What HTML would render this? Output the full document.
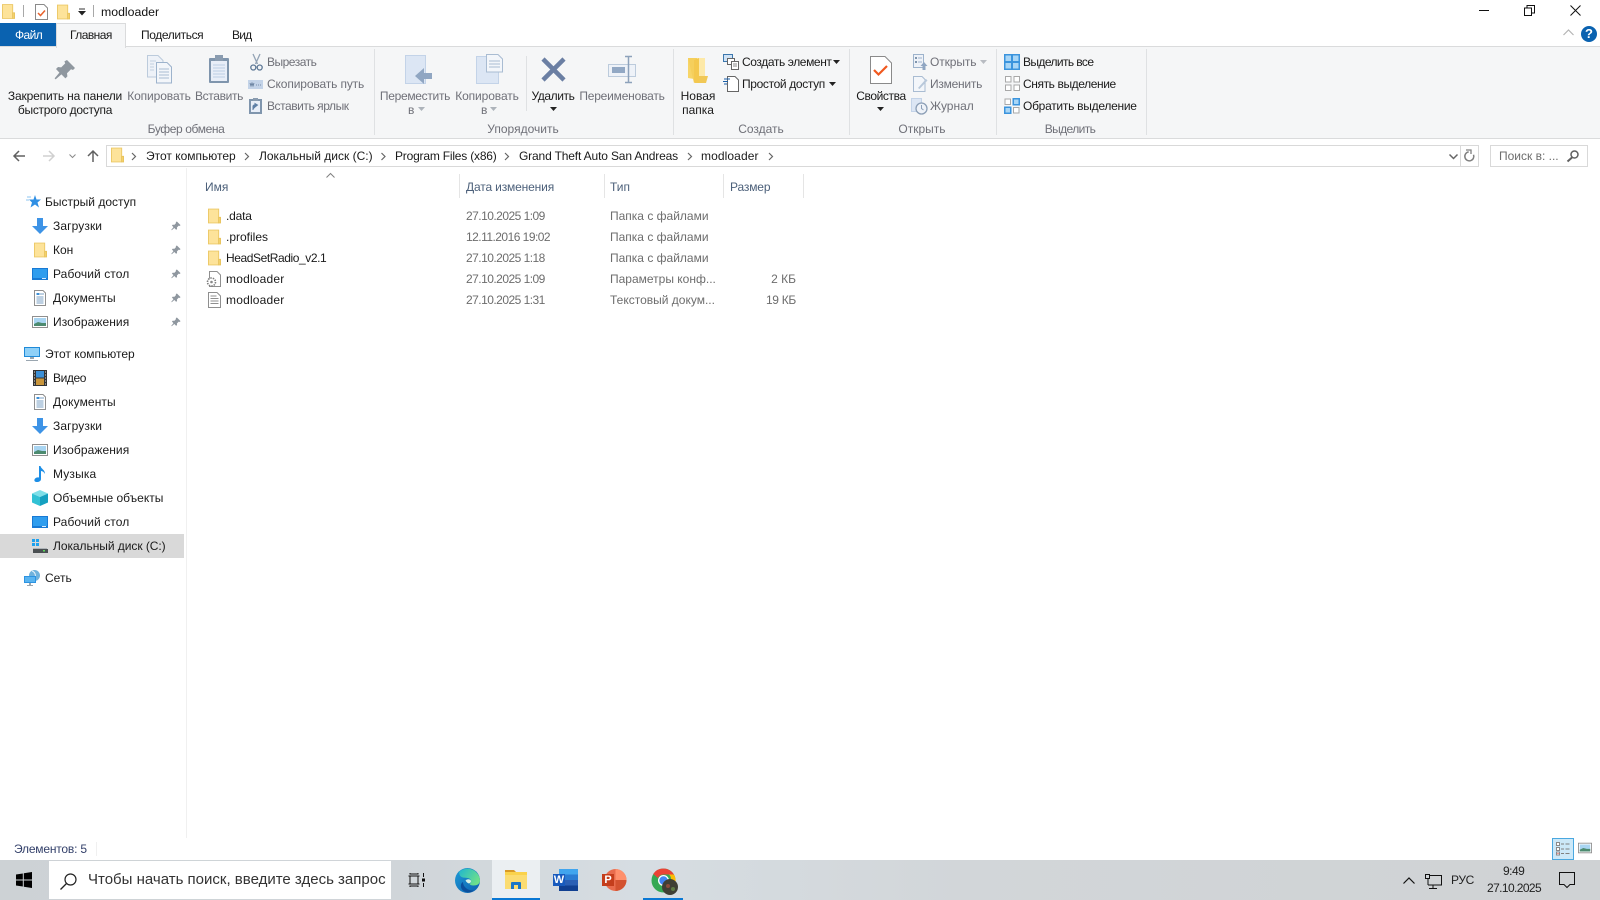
<!DOCTYPE html>
<html lang="ru"><head><meta charset="utf-8"><title>modloader</title>
<style>
html,body{margin:0;padding:0;width:1600px;height:900px;overflow:hidden;background:#fff}
body{position:relative;font:12px/16px "Liberation Sans","Noto Sans CJK SC",sans-serif;color:#1a1a1a;filter:blur(.25px)}
.t{position:absolute;white-space:nowrap;line-height:16px}
.c{transform:translateX(-50%);text-align:center}
.g{color:#6f7078}
.s{color:#6d6d6d}
.d{letter-spacing:-.53px}
.b{position:absolute}
svg{position:absolute;overflow:visible}
</style></head><body>
<svg width="0" height="0" style="position:absolute"><defs>
<symbol id="folder" viewBox="0 0 14 16"><path d="M.5.5H11.500V15.500H.5Z" fill="#fde39a" stroke="#ecc866"/><path d="M11.500 9.500h2v6h-2z" fill="#f6d56d" stroke="#e8c35e"/></symbol>
<symbol id="down" viewBox="0 0 16 16"><path d="M5 0h6v8h5l-8 8-8-8h5z" fill="#3d93e6"/></symbol>
<symbol id="desk" viewBox="0 0 16 12"><rect width="16" height="12" fill="#1879d4"/><rect x="1" y="1" width="14" height="9" fill="#2f9dee"/><path d="M10 10.500h4" stroke="#d8ecff"/></symbol>
<symbol id="doc" viewBox="0 0 12 16"><path d="M.5.5H9l2.500 2.500V15.500H.5z" fill="#fff" stroke="#8f8f8f"/><path d="M6 4h4M2.500 7h7M2.500 9h7M2.500 11h7M2.500 13h7" stroke="#7ba2c4"/><path d="M2.500 3h3v2h-3z" fill="#3c8fd6"/></symbol>
<symbol id="pic" viewBox="0 0 16 12"><rect x=".5" y=".5" width="15" height="11" fill="#fff" stroke="#8f8f8f"/><rect x="2" y="2" width="12" height="8" fill="#a9d5f2"/><path d="M2 8l4-2 4 1 4 0v3H2z" fill="#4d8b70"/></symbol>
<symbol id="pin" viewBox="0 0 11 11"><path d="M6.500.5l4 4-1 1-1-.4-2 2 .2 1.600-1 1-2-2L.8 10.200l-.5-.5L2.700 6.800 1 5l1-1 1.600.2 2-2-.4-1z" fill="#8f979f"/></symbol>
</defs></svg>

<!-- title bar -->
<svg style="left:2px;top:4px" width="13" height="15"><use href="#folder" width="13" height="15"/></svg>
<div class="b" style="left:23px;top:5px;width:1px;height:12px;background:#a8a8a8"></div>
<svg style="left:35px;top:4px" width="13" height="16" viewBox="0 0 13 16"><path d="M.5.5H9l3.500 3.500V15.500H.5z" fill="#fff" stroke="#8a8a8a"/><path d="M3 9l2.500 2.500L10 6.500" fill="none" stroke="#e8622c" stroke-width="1.500"/></svg>
<svg style="left:57px;top:4px" width="13" height="16"><use href="#folder" width="13" height="16"/></svg>
<svg style="left:78px;top:9px" width="8" height="7" viewBox="0 0 8 7"><path d="M1 0h6" stroke="#333"/><path d="M0 2h8L4 6.500z" fill="#222"/></svg>
<div class="b" style="left:93px;top:5px;width:1px;height:12px;background:#a8a8a8"></div>
<div class="t" style="left:101px;top:4px;font-size:12.300px;color:#111">modloader</div>
<div class="b" style="left:1479px;top:10px;width:10px;height:1px;background:#111"></div>
<svg style="left:1524px;top:5px" width="11" height="11" viewBox="0 0 11 11"><path d="M.5 3h7v7.500h-7zM3 3V.5h7.500V8H8" fill="none" stroke="#111"/></svg>
<svg style="left:1570px;top:5px" width="11" height="11" viewBox="0 0 11 11"><path d="M.5.5l10 10M10.500.5l-10 10" stroke="#111"/></svg>

<!-- tabs -->
<div class="b" style="left:0;top:23px;width:56px;height:23px;background:#0a62b0"></div>
<div class="t" style="left:15px;top:27px;color:#fff;letter-spacing:-.6px">Файл</div>
<div class="b" style="left:56px;top:23px;width:68px;height:24px;background:#f5f6f7;border:1px solid #dadbdc;border-bottom:0;z-index:2"></div>
<div class="t" style="left:70px;top:27px;z-index:3;letter-spacing:-.55px">Главная</div>
<div class="t" style="left:141px;top:27px;letter-spacing:-.4px">Поделиться</div>
<div class="t" style="left:232px;top:27px;letter-spacing:-.8px">Вид</div>
<svg style="left:1563px;top:29px" width="11" height="7" viewBox="0 0 11 7"><path d="M.5 6L5.500 1l5 5" fill="none" stroke="#b5b5b5" stroke-width="1.200"/></svg>
<div class="b" style="left:1581px;top:26px;width:16px;height:16px;border-radius:50%;background:#0a62b0;color:#fff;font:bold 13px/16px 'Liberation Sans',sans-serif;text-align:center">?</div>

<!-- ribbon -->
<div class="b" style="left:0;top:46px;width:1600px;height:91px;background:#f5f6f7;border-top:1px solid #dadbdc;border-bottom:1px solid #dadbdc"></div>
<div class="b" style="left:374px;top:49px;width:1px;height:86px;background:#dfe1e3"></div>
<div class="b" style="left:526px;top:56px;width:1px;height:55px;background:#dfe1e3"></div>
<div class="b" style="left:673px;top:49px;width:1px;height:86px;background:#dfe1e3"></div>
<div class="b" style="left:849px;top:49px;width:1px;height:86px;background:#dfe1e3"></div>
<div class="b" style="left:996px;top:49px;width:1px;height:86px;background:#dfe1e3"></div>
<div class="b" style="left:1146px;top:49px;width:1px;height:86px;background:#dfe1e3"></div>

<!-- pin -->
<svg style="left:54px;top:59px" width="22" height="22" viewBox="0 0 11 11"><use href="#pin" width="11" height="11"/></svg>
<div class="t c" style="left:65px;top:88px;letter-spacing:-.16px">Закрепить на панели</div>
<div class="t c" style="left:65px;top:102px;letter-spacing:-.3px">быстрого доступа</div>
<!-- copy -->
<svg style="left:147px;top:55px" width="25" height="29" viewBox="0 0 25 29"><path d="M.5.500H11l5 5V22H.5z" fill="#eef2f8" stroke="#bccbdc"/><path d="M9.500 7.500H20l4.500 4.500v16H9.500z" fill="#f3f6fa" stroke="#9db3cc"/><path d="M12 14h10M12 17h10M12 20h10M12 23h10" stroke="#a9bcd2"/><path d="M3 6h6M3 9h4M3 12h4M3 15h4" stroke="#c3d0df"/></svg>
<div class="t c g" style="left:159px;top:88px;letter-spacing:-.1px">Копировать</div>
<!-- paste -->
<svg style="left:208px;top:55px" width="22" height="29" viewBox="0 0 22 29"><rect x="1" y="3" width="20" height="25" rx="1" fill="#7f95ad"/><rect x="3" y="6" width="16" height="20" fill="#e8eef8"/><path d="M5 10h12M5 13h12M5 16h12M5 19h12M5 22h12" stroke="#bccde3"/><rect x="7" y="0" width="8" height="6" fill="#8a9cb0"/></svg>
<div class="t c g" style="left:219px;top:88px;letter-spacing:-.35px">Вставить</div>
<!-- small clipboard -->
<svg style="left:250px;top:54px" width="13" height="17" viewBox="0 0 13 17"><path d="M3 0l4.500 10M10 0L5.500 10" stroke="#93a3b5" stroke-width="1.300"/><circle cx="3.300" cy="13.500" r="2.500" fill="none" stroke="#5d7896" stroke-width="1.300"/><circle cx="9.700" cy="13.500" r="2.500" fill="none" stroke="#5d7896" stroke-width="1.300"/></svg>
<div class="t g" style="left:267px;top:54px;letter-spacing:-.5px">Вырезать</div>
<svg style="left:248px;top:80px" width="15" height="9" viewBox="0 0 15 9"><rect width="15" height="9" fill="#c3d3e8"/><path d="M2 3l1 3 1-3 1 3 1-3M8 5h1M10 5h1M12 5h1" stroke="#5f7897" fill="none" stroke-width=".8"/></svg>
<div class="t g" style="left:267px;top:76px;letter-spacing:-.13px">Скопировать путь</div>
<svg style="left:249px;top:98px" width="13" height="16" viewBox="0 0 13 16"><rect x="0" y="1" width="13" height="15" fill="#7f95ad"/><rect x="2" y="3" width="9" height="11" fill="#e8eef8"/><rect x="4" y="0" width="5" height="3" fill="#8a9cb0"/><path d="M4 12V8l1-1h3M6 5.500l2.500 1.500L6 9z" fill="#5e7fa6" stroke="#5e7fa6"/></svg>
<div class="t g" style="left:267px;top:98px;letter-spacing:-.45px">Вставить ярлык</div>
<div class="t c g" style="left:186px;top:121px;letter-spacing:-.4px">Буфер обмена</div>

<!-- move/copy -->
<svg style="left:405px;top:55px" width="28" height="29" viewBox="0 0 28 29"><rect x=".5" y=".5" width="20" height="28" fill="#dce6f4" stroke="#c3d3e8"/><path d="M19 13v5h8v6h-8v5L10 21z" fill="#90a6c2"/></svg>
<div class="t c g" style="left:415px;top:88px;letter-spacing:-.3px">Переместить</div>
<div class="t g" style="left:408px;top:102px">в</div>
<svg style="left:418px;top:107px" width="7" height="4"><path d="M0 0h7L3.500 4z" fill="#adb3ba"/></svg>
<svg style="left:476px;top:54px" width="27" height="30" viewBox="0 0 27 30"><rect x=".5" y="2.500" width="22" height="27" fill="#dce6f4" stroke="#c3d3e8"/><path d="M10.500.5H22l4.500 4.500V18H10.500z" fill="#f3f6fa" stroke="#a9bcd2"/><path d="M13 7h11M13 10h11M13 13h11" stroke="#a9bcd2"/></svg>
<div class="t c g" style="left:487px;top:88px;letter-spacing:-.1px">Копировать</div>
<div class="t g" style="left:481px;top:102px">в</div>
<svg style="left:490px;top:107px" width="7" height="4"><path d="M0 0h7L3.500 4z" fill="#adb3ba"/></svg>
<svg style="left:541px;top:57px" width="25" height="25" viewBox="0 0 25 25"><path d="M2 2l21 21M23 2L2 23" stroke="#6b7fa3" stroke-width="4.500"/></svg>
<div class="t c" style="left:553px;top:88px;letter-spacing:-.4px">Удалить</div>
<svg style="left:550px;top:107px" width="7" height="4"><path d="M0 0h7L3.500 4z" fill="#222"/></svg>
<svg style="left:608px;top:56px" width="29" height="27" viewBox="0 0 29 27"><rect x=".5" y="8.500" width="27" height="12" fill="#eef2f8" stroke="#bccbdc"/><rect x="4" y="11" width="13" height="6" fill="#92a8c4"/><path d="M17 .5h3.500L24 .5M17 26.500h7M20.500 1v25" stroke="#8da2bb" stroke-width="1.500" fill="none"/></svg>
<div class="t c g" style="left:622px;top:88px;letter-spacing:-.2px">Переименовать</div>
<div class="t c g" style="left:523px;top:121px">Упорядочить</div>

<!-- new -->
<svg style="left:687px;top:57px" width="22" height="28" viewBox="0 0 22 28"><path d="M1 1h6v21l-6-1z" fill="#f7d568"/><path d="M1 1l9 0v24l-3 1z" fill="#f5cf5c"/><path d="M10 1h8v18l-8 0z" fill="#fde9a8"/><path d="M7 19h14l-2 7H8z" fill="#f1c856"/><path d="M7 3l5-2v25l-5-1z" fill="#f4c84e"/></svg>
<div class="t c" style="left:698px;top:88px">Новая</div>
<div class="t c" style="left:698px;top:102px">папка</div>
<svg style="left:723px;top:54px" width="16" height="16" viewBox="0 0 16 16"><rect x=".5" y=".5" width="9" height="7" fill="#cfe2f5" stroke="#3c77ad"/><rect x="4.500" y="4.500" width="7" height="6" fill="#fff" stroke="#666"/><rect x="8.500" y="7.500" width="7" height="8" fill="#fff" stroke="#666"/><path d="M10 10h4M10 12h4" stroke="#888"/></svg>
<div class="t" style="left:742px;top:54px;letter-spacing:-.4px">Создать элемент</div>
<svg style="left:833px;top:60px" width="7" height="4"><path d="M0 0h7L3.500 4z" fill="#222"/></svg>
<svg style="left:723px;top:76px" width="16" height="16" viewBox="0 0 16 16"><path d="M4.500.5H12l3.500 3.500v11.500h-11z" fill="#fff" stroke="#666"/><path d="M1 3h6M0 5.500h5M1 8h3" stroke="#1a5fa8" stroke-width="1"/></svg>
<div class="t" style="left:742px;top:76px;letter-spacing:-.35px">Простой доступ</div>
<svg style="left:829px;top:82px" width="7" height="4"><path d="M0 0h7L3.500 4z" fill="#222"/></svg>
<div class="t c g" style="left:761px;top:121px">Создать</div>

<!-- open -->
<svg style="left:870px;top:56px" width="22" height="28" viewBox="0 0 22 28"><path d="M.5.500H15l6.500 6.500v20.500H.5z" fill="#fff" stroke="#8a8a8a"/><path d="M4 14l4.500 4.500L17 10" fill="none" stroke="#f0581f" stroke-width="2.200"/></svg>
<div class="t c" style="left:881px;top:88px;letter-spacing:-.4px">Свойства</div>
<svg style="left:877px;top:107px" width="7" height="4"><path d="M0 0h7L3.500 4z" fill="#222"/></svg>
<svg style="left:913px;top:54px" width="15" height="16" viewBox="0 0 15 16"><rect x=".5" y=".5" width="10" height="13" fill="#eef2f8" stroke="#9db3cc"/><path d="M2 3h2v2H2zM2 7h2v2H2z" fill="#7f95ad"/><path d="M5 4h4M5 8h4" stroke="#9db3cc"/><path d="M11 8l3.500 4H12.500v4h-3v-4H7.500z" fill="#90a6c2"/></svg>
<div class="t g" style="left:930px;top:54px;letter-spacing:-.1px">Открыть</div>
<svg style="left:980px;top:60px" width="7" height="4"><path d="M0 0h7L3.500 4z" fill="#b8bcc2"/></svg>
<svg style="left:913px;top:76px" width="15" height="16" viewBox="0 0 15 16"><path d="M.5.500H9l3 3V15.500H.5z" fill="#f3f6fa" stroke="#a9bcd2"/><path d="M5 12l8-9 1.500 1.500L6.500 13z" fill="#b8c8da"/></svg>
<div class="t g" style="left:930px;top:76px;letter-spacing:-.25px">Изменить</div>
<svg style="left:911px;top:98px" width="17" height="17" viewBox="0 0 17 17"><rect x=".5" y=".5" width="10" height="13" fill="#dce6f4" stroke="#c3d3e8"/><circle cx="10.500" cy="10.500" r="5.500" fill="#eef2f8" stroke="#8c9fb6" stroke-width="1.300"/><path d="M10.500 7v3.500l2 1.500" fill="none" stroke="#8c9fb6"/></svg>
<div class="t g" style="left:930px;top:98px">Журнал</div>
<div class="t c g" style="left:922px;top:121px">Открыть</div>

<!-- select -->
<svg style="left:1004px;top:54px" width="16" height="16" viewBox="0 0 16 16"><rect width="16" height="16" fill="#3b94dd"/><path d="M1.500 1.500h5.500v5.500H1.500zM9 1.500h5.500v5.500H9zM1.500 9h5.500v5.500H1.500zM9 9h5.500v5.500H9z" fill="#a9d6f6"/></svg>
<div class="t" style="left:1023px;top:54px;letter-spacing:-.6px">Выделить все</div>
<svg style="left:1005px;top:76px" width="15" height="15" viewBox="0 0 15 15"><path d="M.5.500h5.500v5.500H.5zM9 .5h5.500v5.500H9zM.5 9h5.500v5.500H.5zM9 9h5.500v5.500H9z" fill="#fff" stroke="#a8a8a8"/></svg>
<div class="t" style="left:1023px;top:76px;letter-spacing:-.4px">Снять выделение</div>
<svg style="left:1004px;top:98px" width="16" height="16" viewBox="0 0 16 16"><path d="M1 1h5.500v5.500H1z" fill="#fff" stroke="#a8a8a8"/><path d="M8.500 0H16v7.500H8.500zM0 8.500h7.500V16H0z" fill="#3b94dd"/><path d="M10 1.500h4.500V6H10zM1.500 10H6v4.500H1.500z" fill="#a9d6f6"/><path d="M9.500 9.500H15V15H9.500z" fill="#fff" stroke="#a8a8a8"/></svg>
<div class="t" style="left:1023px;top:98px;letter-spacing:-.27px">Обратить выделение</div>
<div class="t c g" style="left:1070px;top:121px;letter-spacing:-.6px">Выделить</div>

<!-- nav -->
<svg style="left:13px;top:150px" width="12" height="12" viewBox="0 0 12 12"><path d="M12 6H1.500M6 1L1 6l5 5" fill="none" stroke="#606060" stroke-width="1.500"/></svg>
<svg style="left:43px;top:150px" width="12" height="12" viewBox="0 0 12 12"><path d="M0 6h10.500M6 1l5 5-5 5" fill="none" stroke="#d0d0d0" stroke-width="1.500"/></svg>
<svg style="left:69px;top:154px" width="7" height="4" viewBox="0 0 7 4"><path d="M.5.500l3 3 3-3" fill="none" stroke="#8a8a8a"/></svg>
<svg style="left:87px;top:150px" width="12" height="12" viewBox="0 0 12 12"><path d="M6 12V1.500M1 6l5-5 5 5" fill="none" stroke="#606060" stroke-width="1.500"/></svg>
<div class="b" style="left:106px;top:145px;width:1373px;height:22px;border:1px solid #d9d9d9;box-sizing:border-box;background:#fff"></div>
<svg style="left:111px;top:147px" width="13" height="16"><use href="#folder" width="13" height="16"/></svg>
<div class="t" style="left:146px;top:148px">Этот компьютер</div>
<div class="t" style="left:259px;top:148px">Локальный диск (C:)</div>
<div class="t" style="left:395px;top:148px;letter-spacing:-.2px">Program Files (x86)</div>
<div class="t" style="left:519px;top:148px;letter-spacing:-.15px">Grand Theft Auto San Andreas</div>
<div class="t" style="left:701px;top:148px;letter-spacing:.1px">modloader</div>
<svg style="left:0;top:0" width="1" height="1"><path d="M132 153l3.500 3.500-3.500 3.500M245 153l3.500 3.500-3.500 3.500M381.500 153l3.500 3.500-3.500 3.500M505 153l3.500 3.500-3.500 3.500M688 153l3.500 3.500-3.500 3.500M769 153l3.500 3.500-3.500 3.500" fill="none" stroke="#666" stroke-width="1.200"/></svg>
<svg style="left:1449px;top:154px" width="9" height="6" viewBox="0 0 9 6"><path d="M.5.500l4 4 4-4" fill="none" stroke="#666" stroke-width="1.500"/></svg>
<div class="b" style="left:1460px;top:145px;width:1px;height:22px;background:#d9d9d9"></div>
<svg style="left:1464px;top:150px" width="11" height="13" viewBox="0 0 11 13"><path d="M3 2.500A4.500 4.500 0 1 0 8.500 3.500" fill="none" stroke="#808080" stroke-width="1.500" transform="rotate(20 5.500 7)"/><path d="M2 0h5v4" fill="none" stroke="#808080" stroke-width="1.300"/></svg>
<div class="b" style="left:1490px;top:145px;width:98px;height:22px;border:1px solid #d9d9d9;box-sizing:border-box"></div>
<div class="t s" style="left:1499px;top:148px">Поиск в: ...</div>
<svg style="left:1567px;top:150px" width="12" height="12" viewBox="0 0 12 12"><circle cx="7.500" cy="4.500" r="3.500" fill="none" stroke="#606060" stroke-width="1.500"/><path d="M5 7.500L.5 11.500" stroke="#606060" stroke-width="2"/></svg>

<!-- sidebar -->
<div class="b" style="left:186px;top:168px;width:1px;height:670px;background:#f0f0f0"></div>
<div class="b" style="left:0;top:534px;width:184px;height:24px;background:#d9d9d9"></div>
<svg style="left:26px;top:195px" width="15" height="14" viewBox="0 0 15 14"><path d="M9 0l1.500 4.500H15l-3.500 3 1.500 5-4-3-4.500 3 1.500-5-3-3h4.500z" fill="#2f8fe4"/><path d="M1 2h4M0 5h3" stroke="#8cc4f0"/></svg>
<div class="t" style="left:45px;top:194px">Быстрый доступ</div>
<svg style="left:32px;top:218px" width="16" height="16"><use href="#down" width="16" height="16"/></svg>
<div class="t" style="left:53px;top:218px;letter-spacing:.1px">Загрузки</div>
<svg style="left:34px;top:242px" width="13" height="16"><use href="#folder" width="13" height="16"/></svg>
<div class="t" style="left:53px;top:242px">Кон</div>
<svg style="left:32px;top:268px" width="16" height="12"><use href="#desk" width="16" height="12"/></svg>
<div class="t" style="left:53px;top:266px;letter-spacing:.08px">Рабочий стол</div>
<svg style="left:34px;top:290px" width="12" height="16"><use href="#doc" width="12" height="16"/></svg>
<div class="t" style="left:53px;top:290px;letter-spacing:.1px">Документы</div>
<svg style="left:32px;top:316px" width="16" height="12"><use href="#pic" width="16" height="12"/></svg>
<div class="t" style="left:53px;top:314px;letter-spacing:.08px">Изображения</div>
<svg style="left:171px;top:221px" width="10" height="10"><use href="#pin" width="10" height="10"/></svg>
<svg style="left:171px;top:245px" width="10" height="10"><use href="#pin" width="10" height="10"/></svg>
<svg style="left:171px;top:269px" width="10" height="10"><use href="#pin" width="10" height="10"/></svg>
<svg style="left:171px;top:293px" width="10" height="10"><use href="#pin" width="10" height="10"/></svg>
<svg style="left:171px;top:317px" width="10" height="10"><use href="#pin" width="10" height="10"/></svg>

<svg style="left:24px;top:347px" width="16" height="15" viewBox="0 0 16 15"><rect width="16" height="10" fill="#1f8ad8"/><rect x="1" y="1" width="14" height="8" fill="#8fd0f7"/><path d="M6 10h4v2H6zM2 13h12v1H2z" fill="#9aa6b0"/></svg>
<div class="t" style="left:45px;top:346px">Этот компьютер</div>
<svg style="left:33px;top:370px" width="14" height="16" viewBox="0 0 14 16"><rect width="14" height="16" fill="#333"/><rect x="3" y="1" width="8" height="6.500" fill="#3b8fd6"/><rect x="3" y="8.500" width="8" height="6.500" fill="#c9953b"/><path d="M1 2h1M1 5h1M1 8h1M1 11h1M1 14h1M12 2h1M12 5h1M12 8h1M12 11h1M12 14h1" stroke="#ddd"/></svg>
<div class="t" style="left:53px;top:370px;letter-spacing:-.4px">Видео</div>
<svg style="left:34px;top:394px" width="12" height="16"><use href="#doc" width="12" height="16"/></svg>
<div class="t" style="left:53px;top:394px;letter-spacing:.1px">Документы</div>
<svg style="left:32px;top:418px" width="16" height="16"><use href="#down" width="16" height="16"/></svg>
<div class="t" style="left:53px;top:418px;letter-spacing:.1px">Загрузки</div>
<svg style="left:32px;top:444px" width="16" height="12"><use href="#pic" width="16" height="12"/></svg>
<div class="t" style="left:53px;top:442px;letter-spacing:.08px">Изображения</div>
<svg style="left:34px;top:466px" width="12" height="16" viewBox="0 0 12 16"><path d="M5 0h1.500c.5 3 4.500 3.500 4.500 8-1-2-2.500-3-4-3v8c0 2-2 3-4 3s-3-1-2.500-2.500S3 11 5 11.500z" fill="#1c8ee6"/></svg>
<div class="t" style="left:53px;top:466px;letter-spacing:.15px">Музыка</div>
<svg style="left:32px;top:490px" width="16" height="16" viewBox="0 0 16 16"><path d="M8 0l8 3.500L8 7 0 3.500z" fill="#7fdfe8"/><path d="M0 3.500L8 7v9l-8-3.500z" fill="#31c1d4"/><path d="M16 3.500L8 7v9l8-3.500z" fill="#15a0c0"/></svg>
<div class="t" style="left:53px;top:490px">Объемные объекты</div>
<svg style="left:32px;top:516px" width="16" height="12"><use href="#desk" width="16" height="12"/></svg>
<div class="t" style="left:53px;top:514px;letter-spacing:.08px">Рабочий стол</div>
<svg style="left:32px;top:539px" width="16" height="14" viewBox="0 0 16 14"><path d="M0 0h3v3H0zM4 0h3v3H4zM0 4h3v3H0zM4 4h3v3H4z" fill="#1ea1ee"/><path d="M1 9h14v1H1z" fill="#aeb4b8"/><rect x="1" y="10" width="15" height="4" fill="#4a4f52"/><rect x="11" y="11" width="2" height="1.500" fill="#5bd75b"/></svg>
<div class="t" style="left:53px;top:538px;letter-spacing:-.05px">Локальный диск (C:)</div>
<svg style="left:24px;top:570px" width="17" height="16" viewBox="0 0 17 16"><circle cx="10.500" cy="5.500" r="5.500" fill="#6fb2dc"/><path d="M8 1c3 1 4 4 3 8" stroke="#e5f2fa" fill="none"/><rect y="6" width="12" height="7" fill="#2c93e2"/><rect x="1" y="7" width="10" height="5" fill="#59b4f0"/><path d="M5 13h2v2H5zM3 15h6v1H3z" fill="#9aa6b0"/></svg>
<div class="t" style="left:45px;top:570px">Сеть</div>

<!-- list header -->
<div class="b" style="left:459px;top:174px;width:1px;height:24px;background:#e5e5e5"></div>
<div class="b" style="left:604px;top:174px;width:1px;height:24px;background:#e5e5e5"></div>
<div class="b" style="left:723px;top:174px;width:1px;height:24px;background:#e5e5e5"></div>
<div class="b" style="left:803px;top:174px;width:1px;height:24px;background:#e5e5e5"></div>
<svg style="left:326px;top:173px" width="9" height="5" viewBox="0 0 9 5"><path d="M.5 4.500l4-4 4 4" fill="none" stroke="#808080"/></svg>
<div class="t" style="left:205px;top:179px;color:#4c607a">Имя</div>
<div class="t" style="left:466px;top:179px;color:#4c607a;letter-spacing:-.15px">Дата изменения</div>
<div class="t" style="left:610px;top:179px;color:#4c607a">Тип</div>
<div class="t" style="left:730px;top:179px;color:#4c607a;letter-spacing:-.15px">Размер</div>

<!-- rows -->
<svg style="left:208px;top:208px" width="13" height="16"><use href="#folder" width="13" height="16"/></svg>
<svg style="left:208px;top:229px" width="13" height="16"><use href="#folder" width="13" height="16"/></svg>
<svg style="left:208px;top:250px" width="13" height="16"><use href="#folder" width="13" height="16"/></svg>
<svg style="left:206px;top:271px" width="15" height="16" viewBox="0 0 15 16"><path d="M3.500.5H11l3.500 3.500v11.500h-11z" fill="#fff" stroke="#8f8f8f"/><circle cx="5.500" cy="11" r="4" fill="#fff" stroke="#7f7f7f" stroke-width="1.600" stroke-dasharray="1.500 1"/><circle cx="5.500" cy="11" r="1.300" fill="#888"/></svg>
<svg style="left:208px;top:292px" width="13" height="16" viewBox="0 0 13 16"><path d="M.5.5H9l3.500 3.500v11.500H.5z" fill="#fff" stroke="#8f8f8f"/><path d="M2.500 4h6M2.500 6.500h8M2.500 9h8M2.500 11.500h8" stroke="#8f8f8f"/></svg>
<div class="t" style="left:226px;top:208px;letter-spacing:-.2px">.data</div>
<div class="t" style="left:226px;top:229px">.profiles</div>
<div class="t" style="left:226px;top:250px;letter-spacing:-.42px">HeadSetRadio_v2.1</div>
<div class="t" style="left:226px;top:271px;letter-spacing:.2px">modloader</div>
<div class="t" style="left:226px;top:292px;letter-spacing:.2px">modloader</div>
<div class="t s d" style="left:466px;top:208px">27.10.2025 1:09</div>
<div class="t s d" style="left:466px;top:229px">12.11.2016 19:02</div>
<div class="t s d" style="left:466px;top:250px">27.10.2025 1:18</div>
<div class="t s d" style="left:466px;top:271px">27.10.2025 1:09</div>
<div class="t s d" style="left:466px;top:292px">27.10.2025 1:31</div>
<div class="t s" style="left:610px;top:208px">Папка с файлами</div>
<div class="t s" style="left:610px;top:229px">Папка с файлами</div>
<div class="t s" style="left:610px;top:250px">Папка с файлами</div>
<div class="t s" style="left:610px;top:271px">Параметры конф...</div>
<div class="t s" style="left:610px;top:292px">Текстовый докум...</div>
<div class="t s" style="right:804px;top:271px">2 КБ</div>
<div class="t s" style="right:804px;top:292px;letter-spacing:-.3px">19 КБ</div>

<!-- status -->
<div class="t" style="left:14px;top:841px;color:#33406a;letter-spacing:-.2px">Элементов: 5</div>
<div class="b" style="left:96px;top:842px;width:1px;height:14px;background:#f0f0f0"></div>
<div class="b" style="left:1552px;top:838px;width:22px;height:22px;background:#cce8f8;border:1px solid #4aa8e0;box-sizing:border-box"></div>
<svg style="left:1556px;top:842px" width="15" height="14" viewBox="0 0 15 14"><path d="M.5.5h3v3h-3zM.5 5.500h3v3h-3zM.5 10h3v3h-3z" fill="#fff" stroke="#8a8a8a"/><path d="M5 2h3M9.500 2h4M5 7h3M9.500 7h4M5 11.500h3M9.500 11.500h4" stroke="#808080"/><path d="M1.500 11h1v1h-1z" fill="#d33"/></svg>
<svg style="left:1578px;top:842px" width="14" height="12"><use href="#pic" width="14" height="12"/></svg>

<!-- taskbar -->
<div class="b" style="left:0;top:860px;width:1600px;height:40px;background:linear-gradient(90deg,#cdd2d5 0,#d0d5d9 25%,#d6dde2 40%,#d2d6d9 60%,#cfd2d4 100%)"></div>
<svg style="left:16px;top:872px" width="16" height="16" viewBox="0 0 16 16"><path d="M0 2.500l6.800-1V7.500H0zM7.800 1.300L16 0v7.500H7.800zM0 8.500h6.800v6L0 13.500zM7.800 8.500H16V16l-8.200-1.200z" fill="#000"/></svg>
<div class="b" style="left:49px;top:861px;width:342px;height:38px;background:#fff"></div>
<svg style="left:60px;top:873px" width="17" height="17" viewBox="0 0 17 17"><circle cx="10.500" cy="6.500" r="5.500" fill="none" stroke="#222" stroke-width="1.200"/><path d="M6.500 10.500L.5 16.500" stroke="#222" stroke-width="1.300"/></svg>
<div class="t" style="left:88px;top:872px;font-size:15px;color:#333">Чтобы начать поиск, введите здесь запрос</div>
<svg style="left:408px;top:872px" width="17" height="16" viewBox="0 0 17 16"><path d="M.5 4h11M.5 12h11M2 4v8M10 4v8M2 1v1h8V1M2 15v-1h8v1M15.500 1v4M15.500 11v4" fill="none" stroke="#111"/><rect x="14" y="6.500" width="3" height="3" fill="#111"/></svg>
<svg style="left:455px;top:868px" width="25" height="25" viewBox="0 0 25 25"><defs><linearGradient id="ed" x1="0" y1="0" x2="1" y2="1"><stop offset="0" stop-color="#1e9bd6"/><stop offset="1" stop-color="#0d5fb0"/></linearGradient><linearGradient id="ed2" x1="0" y1="0" x2="1" y2=".6"><stop offset="0" stop-color="#1fb5cf"/><stop offset="1" stop-color="#6fe08a"/></linearGradient></defs><circle cx="12.500" cy="12.500" r="12.500" fill="url(#ed)"/><path d="M4 4A12.500 12.500 0 0 1 25 12.500c0 3.500-3 5-6.500 5-2 0-3.500-.6-4-1.500 2-1 2.500-5.500-2-6C8 9.500 4.500 10 4 4z" fill="url(#ed2)"/><path d="M10.500 12.500c2-2 5-1.500 5.500.5 0 1.500-1 2-2 2.500-1.500-.2-2.500-1.500-3.500-3z" fill="#d9f2e6"/><path d="M8 14c0 5 5 9 11 8.500-3 2.500-9 2.500-11.500-.5C5 19.500 5.500 15 8 14z" fill="#0b4f9c"/></svg>
<div class="b" style="left:492px;top:860px;width:48px;height:40px;background:#ebeff2"></div>
<div class="b" style="left:492px;top:898px;width:48px;height:2px;background:#0a78d4"></div>
<svg style="left:505px;top:870px" width="22" height="19" viewBox="0 0 22 19"><path d="M0 0h9l2 2h-11z" fill="#d99a26"/><rect y="2" width="22" height="17" fill="#fad24b"/><rect y="5" width="22" height="14" fill="#fbdc71"/><path d="M6 19v-6a1 1 0 0 1 1-1h8a1 1 0 0 1 1 1v6h-3v-4H9v4z" fill="#1976c8"/></svg>
<svg style="left:553px;top:869px" width="25" height="22" viewBox="0 0 25 22"><rect x="6" width="19" height="22" fill="#2a5fb4"/><rect x="6" width="19" height="5.500" fill="#41a5ee"/><rect x="6" y="5.500" width="19" height="5.500" fill="#2b7cd3"/><rect x="6" y="16.500" width="19" height="5.500" fill="#103f91"/><rect y="5" width="12" height="12" fill="#185abd"/></svg>
<div class="t" style="left:553px;top:872px;width:12px;text-align:center;font-weight:bold;color:#fff;font-size:11px">W</div>
<svg style="left:602px;top:869px" width="25" height="22" viewBox="0 0 25 22"><circle cx="13.500" cy="11" r="11" fill="#e86c4d"/><path d="M13.500 0A11 11 0 0 1 24.500 11H13.500z" fill="#ff8f6b"/><path d="M13.500 11H24.500A11 11 0 0 1 13.500 22z" fill="#d35230"/><rect y="5" width="12" height="12" fill="#c43e1c"/></svg>
<div class="t" style="left:602px;top:872px;width:12px;text-align:center;font-weight:bold;color:#fff;font-size:11px">P</div>
<svg style="left:651px;top:868px" width="27" height="27" viewBox="0 0 27 27"><circle cx="12.500" cy="12.500" r="12" fill="#34a853"/><path d="M12.500.5A12 12 0 0 1 23 6.500H12.500a6 6 0 0 0-5.500 3.500L2.200 6A12 12 0 0 1 12.500.5z" fill="#ea4335"/><path d="M23 6.500A12 12 0 0 1 13 24.500l5-9a6 6 0 0 0 0-9z" fill="#fbbc05"/><circle cx="12.500" cy="12.500" r="5.500" fill="#fff"/><circle cx="12.500" cy="12.500" r="4.200" fill="#4285f4"/><circle cx="19" cy="19" r="8" fill="#3f3f35"/><circle cx="17" cy="18" r="2" fill="#8a4b3a"/><circle cx="22" cy="21" r="2" fill="#5e7a45"/></svg>
<div class="b" style="left:643px;top:898px;width:40px;height:2px;background:#0a78d4"></div>

<svg style="left:1403px;top:877px" width="12" height="7" viewBox="0 0 12 7"><path d="M.5 6.500l5.500-5.500 5.500 5.500" fill="none" stroke="#111" stroke-width="1.200"/></svg>
<svg style="left:1425px;top:874px" width="17" height="15" viewBox="0 0 17 15"><path d="M3 1.500h13.500v9.500H3M4 14.500h8M8 11v3.500" fill="none" stroke="#111"/><rect x=".5" y=".5" width="4" height="4" fill="#d0d5d9" stroke="#111"/><path d="M3 4.500V11" stroke="#111"/></svg>
<div class="t" style="left:1451px;top:872px;color:#222;letter-spacing:-.4px">РУС</div>
<div class="t" style="left:1503px;top:863px;color:#222;letter-spacing:-.5px">9:49</div>
<div class="t" style="left:1487px;top:880px;color:#222;letter-spacing:-.6px">27.10.2025</div>
<svg style="left:1559px;top:872px" width="16" height="17" viewBox="0 0 16 17"><path d="M.5.500h15V12.500H11l-3 3-3-3H.5z" fill="none" stroke="#111"/></svg>
</body></html>
